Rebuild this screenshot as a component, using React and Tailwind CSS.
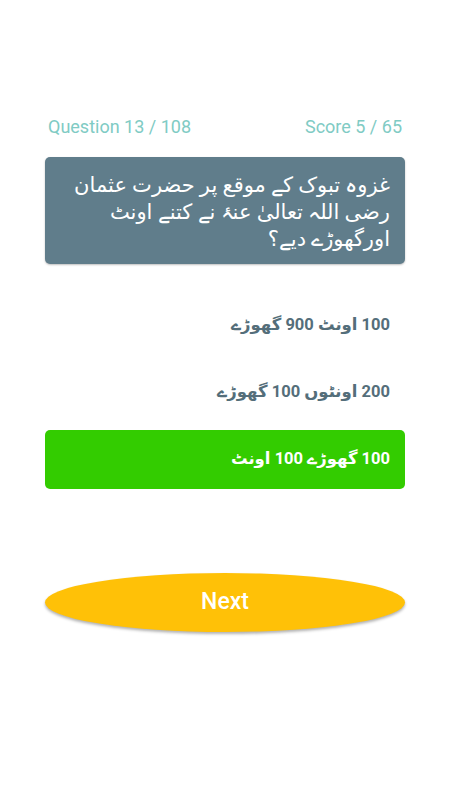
export default function App() {
  const options = [
    { text: '100 اونٹ 900 گھوڑے', correct: false },
    { text: '200 اونٹوں 100 گھوڑے', correct: false },
    { text: '100 گھوڑے 100 اونٹ', correct: true },
  ]

  return (
    <div
      className="min-h-screen w-full bg-white px-[45px]"
      style={{ fontFamily: 'Roboto, "DejaVu Sans", sans-serif' }}
    >
      {/* Header */}
      <div className="flex items-center justify-between pt-[113px] px-[3px] text-[18px] text-[#80cbc4]">
        <span>Question 13 / 108</span>
        <span>Score 5 / 65</span>
      </div>

      {/* Question */}
      <div
        dir="rtl"
        className="mt-[17px] h-[107px] rounded-[5px] bg-[#607d8b] px-[15px] pt-[15px] text-[21px] leading-[27px] text-white shadow-[0_1px_2px_rgba(0,0,0,0.25)]"
      >
        غزوہ تبوک کے موقع پر حضرت عثمان رضی اللہ تعالیٰ عنۂ نے کتنے اونٹ اورگھوڑے دیے؟
      </div>

      {/* Options */}
      <div className="mt-[32px] flex flex-col gap-[8px]">
        {options.map((o) => (
          <div
            key={o.text}
            dir="rtl"
            className={
              o.correct
                ? 'flex h-[59px] items-center rounded-[5px] bg-[#33cc00] px-[15px] text-[16.5px] font-bold text-white'
                : 'flex h-[59px] items-center px-[15px] text-[16.5px] font-bold text-[#546e7a]'
            }
          >
            {o.text}
          </div>
        ))}
      </div>

      {/* Next */}
      <div className="mt-[84px] flex h-[59px] items-center justify-center rounded-[50%] bg-[#ffc107] text-[23px] font-medium text-white shadow-[0_2px_3px_rgba(0,0,0,0.3)]">
        Next
      </div>
    </div>
  )
}
